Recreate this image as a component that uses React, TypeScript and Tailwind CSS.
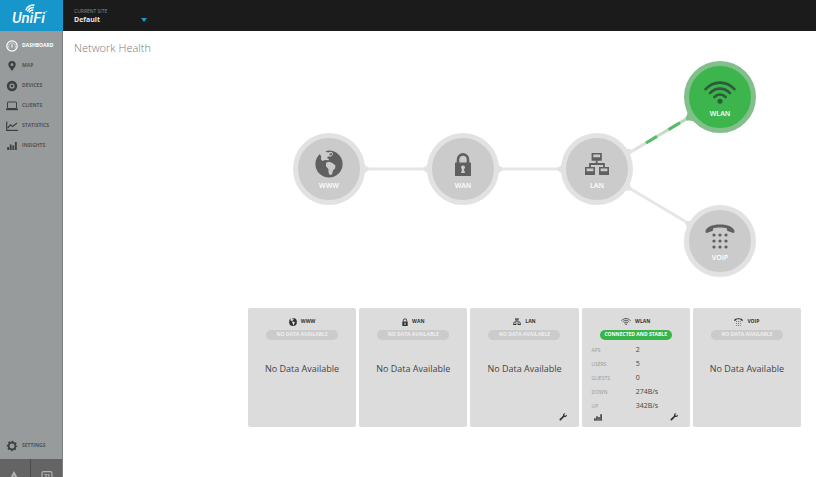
import type { ReactNode } from "react";

type IconProps = { className?: string };

function Globe({ className = "", land = "fill-[#cbcbcb]" }: IconProps & { land?: string }) {
  return (
    <svg viewBox="0 0 28 28" className={className} aria-hidden="true">
      <circle cx="14" cy="14" r="13.6" fill="currentColor" />
      <g className={land}>
        <path d="M4.500 3.500 8 0H13L10.500 1.500 13 2.500 15.500 1.800 17.500 2.500 18 4.500 16 6.500 13 6.500 12 8 14 9 13.500 10.200 10 10 7.500 11 6 9.500 6.200 6.500z" />
        <path d="M11 12.800 14 11.800 17 12.800 20.500 15.500 20 18.500 18 20.500 17 24.500 14.800 25 13.600 23 13.400 19 11 16.400z" />
      </g>
      <path d="M14.500 3.600 17 3.200 17 5 14.800 5.600z" fill="currentColor" />
    </svg>
  );
}

function Lock({ className = "", hole = "fill-[#cbcbcb]" }: IconProps & { hole?: string }) {
  return (
    <svg viewBox="0 0 18 24" className={className} aria-hidden="true">
      <path d="M4 11V7.400a5 5 0 0 1 10 0V11" fill="none" stroke="currentColor" strokeWidth="2.6" />
      <rect x="1" y="10.500" width="16" height="13.500" rx="0.6" fill="currentColor" />
      <path className={hole} d="M9 13.500a2 2 0 0 1 1.2 3.600l-.2.6 1 3.400H7l1-3.400-.2-.6A2 2 0 0 1 9 13.500z" />
    </svg>
  );
}

function Lan({ className = "" }: IconProps) {
  return (
    <svg viewBox="0 0 24 22" className={className} aria-hidden="true">
      <path
        fill="currentColor"
        fillRule="evenodd"
        d="M6.600 0h10.200v7.800H6.600zM8.300 1.500v2.700h6.800V1.500zM0 14h10v8H0zM1.600 15.500v2.700h6.800v-2.700zM14 14h10v8H14zM15.600 15.500v2.700h6.800v-2.700z"
      />
      <path d="M11.700 7.500V11M5 14v-3h14v3" fill="none" stroke="currentColor" strokeWidth="1.800" />
    </svg>
  );
}

function Wifi({ className = "" }: IconProps) {
  return (
    <svg viewBox="0 0 32 23" className={className} aria-hidden="true">
      <g fill="none" stroke="currentColor" strokeWidth="2.600" strokeLinecap="round">
        <path d="M1.600 8.200C9.500-.6 22.500-.6 30.400 8.200" />
        <path d="M6 12.100c5.600-6 14.400-6 20 0" />
        <path d="M10.400 16c3.300-3.300 7.900-3.300 11.200 0" />
      </g>
      <circle cx="16" cy="20.300" r="2.500" fill="currentColor" />
    </svg>
  );
}

function Phone({ className = "" }: IconProps) {
  return (
    <svg viewBox="0 0 30 25" className={className} aria-hidden="true">
      <path
        fill="currentColor"
        d="M.6 6.600C1.500 3 7 .4 15 .4S28.500 3 29.400 6.600c.3 1.300-.2 2.500-1.100 2.300l-5.600-1.900c-.9-.4-1-1.200-.7-2.700C18 3.200 12 3.200 8 4.300c.3 1.500.2 2.300-.7 2.700L1.700 8.900C.8 9.100.3 7.900.6 6.600z"
      />
      <g fill="currentColor">
        {[11, 17, 23].map((y) => [9, 15, 21].map((x) => <circle key={`${x}-${y}`} cx={x} cy={y} r="1.600" />))}
      </g>
    </svg>
  );
}

function Bars({ className = "" }: IconProps) {
  return (
    <svg viewBox="0 0 10 8" className={className} aria-hidden="true">
      <path d="M.2 5h1.900v3H.2zM2.800 2.500h1.800V8H2.800zM5.400 3.500h1.700V8H5.400zM7.900 0h1.900v8H7.900z" fill="currentColor" />
    </svg>
  );
}

function Wrench({ className = "" }: IconProps) {
  return (
    <svg viewBox="0 0 16 16" className={className} aria-hidden="true">
      <path
        fill="currentColor"
        d="M12.800.5 10.600 2.900l.5 2 2 .5 2.400-2.200c.8 2.600-1.300 5.300-4.400 4.700-.6 0-.9.100-1.300.5L4 14.600A1.900 1.900 0 0 1 1.300 12l6.300-5.800c.4-.4.5-.7.5-1.300C7.500 1.800 10.200-.3 12.800.5z"
      />
    </svg>
  );
}

function Gauge({ className = "" }: IconProps) {
  return (
    <svg viewBox="0 0 12 12" className={className} aria-hidden="true">
      <circle cx="6" cy="6" r="5.200" fill="none" stroke="currentColor" strokeWidth="1.200" />
      <path d="M3.200 8.300A3.400 3.400 0 1 1 8.800 8.300" fill="none" stroke="currentColor" strokeWidth=".9" strokeDasharray="1 .7" />
      <path d="M5.400 7.600 5.600 3.900h.8l.2 3.700z" fill="currentColor" />
    </svg>
  );
}

function Pin({ className = "" }: IconProps) {
  return (
    <svg viewBox="0 0 12 12" className={className} aria-hidden="true">
      <path
        fill="currentColor"
        fillRule="evenodd"
        d="M6 1a3.700 3.700 0 0 1 3.700 3.700C9.700 7 6.900 8.600 6 11.300 5.100 8.600 2.300 7 2.300 4.700A3.700 3.700 0 0 1 6 1zm0 2.300a1.400 1.400 0 1 0 0 2.800 1.400 1.400 0 0 0 0-2.800z"
      />
    </svg>
  );
}

function Disc({ className = "" }: IconProps) {
  return (
    <svg viewBox="0 0 12 12" className={className} aria-hidden="true">
      <circle cx="6" cy="6" r="3.900" fill="none" stroke="currentColor" strokeWidth="2.600" />
      <circle cx="6" cy="6" r="1.300" fill="currentColor" />
    </svg>
  );
}

function Laptop({ className = "" }: IconProps) {
  return (
    <svg viewBox="0 0 12 12" className={className} aria-hidden="true">
      <rect x="1.500" y="2" width="9" height="6.500" rx=".4" fill="none" stroke="currentColor" />
      <path d="M0 8.500h12v1.700H0z" fill="currentColor" />
    </svg>
  );
}

function LineChart({ className = "" }: IconProps) {
  return (
    <svg viewBox="0 0 12 12" className={className} aria-hidden="true">
      <path d="M.7 1.500v8.800H12" fill="none" stroke="currentColor" strokeWidth="1.200" />
      <path d="m1.700 8 2.800-3.200 2.200 1.700L11 3" fill="none" stroke="currentColor" strokeWidth="1.200" />
    </svg>
  );
}

function Gear({ className = "" }: IconProps) {
  return (
    <svg viewBox="0 0 12 12" className={className} aria-hidden="true">
      <circle cx="6" cy="6" r="4.500" fill="none" stroke="currentColor" strokeWidth="1.400" strokeDasharray="1.767" strokeDashoffset=".9" />
      <circle cx="6" cy="6" r="3.400" fill="none" stroke="currentColor" strokeWidth="1.800" />
    </svg>
  );
}

function Logo() {
  return (
    <a
      href="#home"
      aria-label="UniFi"
      className="relative flex h-full w-[63px] shrink-0 items-end bg-[#1696ca] pb-[5px] pl-3 text-white"
    >
      <span className="font-[Roboto,sans-serif] text-[15px] leading-4 font-medium italic">UniFi</span>
      <svg viewBox="0 0 10 9" className="absolute top-1 left-[25px] h-[9px] w-[10px]" aria-hidden="true">
        <g fill="none" stroke="currentColor" strokeWidth="1.300">
          <path d="M.8 6.500C1.800 3 4.800 1 9.500 1" />
          <path d="M2.500 7.500C3.400 4.800 5.600 3.500 9 3.500" />
          <path d="M4 8.500C4.800 6.800 6.200 6 8.300 6" />
        </g>
      </svg>
      <span className="absolute top-[10px] left-[45px] text-[3px] leading-[4px]" aria-hidden="true">
        ™
      </span>
    </a>
  );
}

const NAV = [
  { label: "DASHBOARD", icon: <Gauge className="size-3" />, active: true },
  { label: "MAP", icon: <Pin className="size-3" /> },
  { label: "DEVICES", icon: <Disc className="size-3" /> },
  { label: "CLIENTS", icon: <Laptop className="size-3" /> },
  { label: "STATISTICS", icon: <LineChart className="size-3" /> },
  { label: "INSIGHTS", icon: <Bars className="h-2 w-3" /> },
];

function NavLink({ label, icon, active = false }: { label: string; icon: ReactNode; active?: boolean }) {
  return (
    <a
      href={`#${label.toLowerCase()}`}
      className={`flex h-5 items-center gap-1 pl-[6px] text-[5px] font-bold ${active ? "text-white" : "text-[#3d4041]"}`}
    >
      {icon}
      <span className={active ? "" : "text-[#505455]"}>{label}</span>
    </a>
  );
}

function Sidebar() {
  return (
    <nav className="flex w-[63px] shrink-0 flex-col border-r border-[#7c8081] bg-[#979b9c] pt-[5px]">
      {NAV.map((item) => (
        <NavLink key={item.label} {...item} />
      ))}
      <div className="mt-auto pb-[3px]">
        <NavLink label="SETTINGS" icon={<Gear className="size-3" />} />
      </div>
      <div className="grid h-[18px] grid-cols-2 overflow-hidden bg-[#646464] text-[#b5b5b5]">
        <button type="button" aria-label="Alerts" className="flex h-9 items-center justify-center border-r border-[#4c4c4c] pr-[3px]">
          <svg viewBox="0 0 12 12" className="size-3" aria-hidden="true">
            <path fill="currentColor" fillRule="evenodd" d="M6 0 12 11H0zM5.400 4.500v3h1.200v-3z" />
          </svg>
        </button>
        <button type="button" aria-label="Events" className="flex h-9 items-center justify-center">
          <svg viewBox="0 0 12 12" className="size-3" aria-hidden="true">
            <rect x="1" y=".7" width="10" height="10" rx="1.500" fill="none" stroke="currentColor" strokeWidth="1.200" />
            <path d="M3.500 3.500h2L4.500 8M6.500 3.500H8V8" fill="none" stroke="currentColor" />
          </svg>
        </button>
      </div>
    </nav>
  );
}

const NODES = [
  { label: "WWW", place: "left-0 top-[72px]", icon: <Globe className="size-7" /> },
  { label: "WAN", place: "left-[134px] top-[72px]", icon: <Lock className="h-6 w-[18px]" /> },
  { label: "LAN", place: "left-[268px] top-[72px]", icon: <Lan className="h-[22px] w-6" /> },
  { label: "WLAN", place: "left-[391px] top-0", icon: <Wifi className="h-[23px] w-8" />, online: true },
  { label: "VOIP", place: "left-[391px] top-[144px]", icon: <Phone className="h-[25px] w-[30px]" /> },
];

// Where each link meets a node: node centre and direction of the link.
const JOINTS = [
  "translate(36 108)",
  "translate(170 108) rotate(180)",
  "translate(170 108)",
  "translate(304 108) rotate(180)",
  "translate(304 109) rotate(-30)",
  "translate(304 108) rotate(31)",
  "translate(427 181) rotate(210)",
];

const JOINT_SHAPE = "M34 -6Q36.500 -2.500 39.500 -1.500V1.500Q36.500 2.500 34 6z";

function Topology() {
  return (
    <div className="relative mx-auto h-[216px] w-[463px]">
      <svg viewBox="0 0 463 216" className="absolute inset-0 h-full w-full" aria-hidden="true">
        <defs>
          <linearGradient id="uplink" gradientUnits="userSpaceOnUse" x1="340" y1="90" x2="385" y2="63">
            <stop offset="0" stopColor="#e2e2e2" />
            <stop offset="1" stopColor="#b3d8b9" />
          </linearGradient>
        </defs>
        <path d="M36 108h268L427 181" fill="none" stroke="#e6e6e6" strokeWidth="3" />
        <path d="M304 111L427 38" stroke="url(#uplink)" strokeWidth="3" />
        <path d="M353 82 364 75.400M375.500 68.600 387 61.700" stroke="#55bd65" strokeWidth="3" />
        {JOINTS.map((transform) => (
          <path key={transform} d={JOINT_SHAPE} transform={transform} fill="#e2e2e2" />
        ))}
        <path d={JOINT_SHAPE} transform="translate(427 38) rotate(149)" fill="#83bf8c" />
      </svg>
      {NODES.map(({ label, place, icon, online }) => (
        <button
          key={label}
          type="button"
          className={`absolute flex size-[72px] flex-col items-center rounded-full border-[5px] pt-3 ${place} ${
            online ? "border-[#83bf8c] bg-[#3db54d] text-[#30583a]" : "border-[#e2e2e2] bg-[#cbcbcb] text-[#606060]"
          }`}
        >
          <span className="flex h-7 items-center">{icon}</span>
          <span className="mt-1 text-[7px] leading-2 font-semibold text-white">{label}</span>
        </button>
      ))}
    </div>
  );
}

function Card({
  title,
  icon,
  status = "NO DATA AVAILABLE",
  online = false,
  children,
  footer,
}: {
  title: string;
  icon: ReactNode;
  status?: string;
  online?: boolean;
  children?: ReactNode;
  footer?: ReactNode;
}) {
  return (
    <section className="flex h-[119px] flex-col items-center rounded-[2px] bg-[#dcdcdc] pt-2">
      <h2 className="flex h-[11px] items-center gap-1 text-[5px] font-bold text-[#333]">
        {icon}
        {title}
      </h2>
      <p
        className={`mt-[3px] flex h-[10px] w-[72px] items-center justify-center rounded-full text-[5px] font-bold whitespace-nowrap ${
          online ? "bg-[#38b549] text-white" : "bg-[#cbcbcb] text-[#efefef]"
        }`}
      >
        {status}
      </p>
      {children ?? <p className="mt-[17px] text-[9px] leading-6 text-[#444]">No Data Available</p>}
      {footer && <div className="mt-auto flex w-full items-center px-3 pb-[6px] text-[#333]">{footer}</div>}
    </section>
  );
}

const STATS = [
  ["APS", "2"],
  ["USERS", "5"],
  ["GUESTS", "0"],
  ["DOWN", "274B/s"],
  ["UP", "342B/s"],
];

function StatsTable() {
  return (
    <table className="mt-[3px] w-full table-fixed">
      <tbody>
        {STATS.map(([name, value]) => (
          <tr key={name} className="h-[14px]">
            <th scope="row" className="p-0 pl-[10px] text-left align-middle text-[5px] leading-2 font-normal text-[#999]">
              {name}
            </th>
            <td className="p-0 align-middle text-[7px] leading-2 text-[#444]">{value}</td>
          </tr>
        ))}
      </tbody>
    </table>
  );
}

function ConfigButton() {
  return (
    <button type="button" aria-label="Configure" className="ml-auto">
      <Wrench className="size-2" />
    </button>
  );
}

export default function App() {
  return (
    <div className="flex h-screen flex-col overflow-hidden bg-white font-['Open_Sans',sans-serif]">
      <header className="flex h-[31px] shrink-0 bg-[#1b1b1b]">
        <Logo />
        <div className="flex flex-col pt-[7px] pl-[11px]">
          <label htmlFor="site" className="text-[5px] leading-2 text-[#8a8a8a]">
            CURRENT SITE
          </label>
          <div className="relative">
            <select
              id="site"
              className="block h-[10px] w-[74px] appearance-none bg-transparent text-[7px] leading-[10px] font-bold text-[#e6e6e6]"
            >
              <option>Default</option>
            </select>
            <svg viewBox="0 0 6 4" className="pointer-events-none absolute top-[3px] right-[1px] h-1 w-[6px]" aria-hidden="true">
              <path d="M0 0h6L3 4z" fill="#1b9ad2" />
            </svg>
          </div>
        </div>
      </header>
      <div className="flex min-h-0 flex-1">
        <Sidebar />
        <main className="min-w-0 flex-1">
          <h1 className="pt-[10px] pl-[11px] text-[11px] leading-[14px] font-light text-[#777]">Network Health</h1>
          <div className="pt-[6px] pr-[15px] pl-[185px]">
            <Topology />
            <div className="mt-[31px] grid grid-cols-5 gap-[3px]">
              <Card title="WWW" icon={<Globe className="size-2" land="fill-[#dcdcdc]" />} />
              <Card title="WAN" icon={<Lock className="h-2 w-[6px]" hole="fill-[#dcdcdc]" />} />
              <Card title="LAN" icon={<Lan className="h-[7px] w-2" />} footer={<ConfigButton />} />
              <Card
                title="WLAN"
                icon={<Wifi className="h-[7px] w-[10px]" />}
                status="CONNECTED AND STABLE"
                online
                footer={
                  <>
                    <button type="button" aria-label="Statistics">
                      <Bars className="h-[7px] w-2" />
                    </button>
                    <ConfigButton />
                  </>
                }
              >
                <StatsTable />
              </Card>
              <Card title="VOIP" icon={<Phone className="h-2 w-[9px]" />} />
            </div>
          </div>
        </main>
      </div>
    </div>
  );
}
